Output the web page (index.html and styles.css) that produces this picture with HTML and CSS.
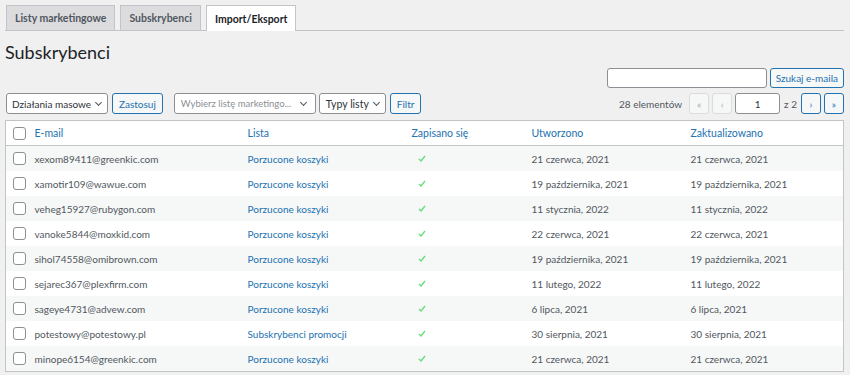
FILE: index.html
```html
<!DOCTYPE html>
<html lang="pl">
<head>
  <meta charset="UTF-8">
  <title>Subskrybenci</title>
  <link rel="stylesheet" href="styles.css">
</head>
<body>
  <div class="wrap">
    <nav class="tabs">
      <a class="tab">Listy marketingowe</a>
      <a class="tab">Subskrybenci</a>
      <a class="tab active">Import/Eksport</a>
    </nav>

    <h1>Subskrybenci</h1>

    <div class="search">
      <input type="text" class="search-input">
      <button class="btn">Szukaj e-maila</button>
    </div>

    <div class="toolbar">
      <div class="left">
        <div class="select w-bulk">Działania masowe <span class="chev"></span></div>
        <button class="btn">Zastosuj</button>
        <div class="select w-list placeholder">Wybierz listę marketingo... <span class="chev"></span></div>
        <div class="select w-type">Typy listy <span class="chev"></span></div>
        <button class="btn">Filtr</button>
      </div>
      <div class="pages">
        <span class="count">28 elementów</span>
        <span class="pbtn off">«</span>
        <span class="pbtn off">‹</span>
        <span class="pinput">1</span>
        <span class="total">z 2</span>
        <span class="pbtn">›</span>
        <span class="pbtn">»</span>
      </div>
    </div>

    <table class="list">
      <colgroup>
        <col class="c-cb"><col class="c-mail"><col class="c-list"><col class="c-sub"><col class="c-created"><col>
      </colgroup>
      <thead>
        <tr>
          <th class="cb"><span class="box"></span></th>
          <th>E-mail</th>
          <th>Lista</th>
          <th>Zapisano się</th>
          <th>Utworzono</th>
          <th>Zaktualizowano</th>
        </tr>
      </thead>
      <tbody>
        <tr><td class="cb"><span class="box"></span></td><td>xexom89411@greenkic.com</td><td><a>Porzucone koszyki</a></td><td class="ok"><svg viewBox="0 0 8 7"><path d="M1 4l2 2 4-5"/></svg></td><td>21 czerwca, 2021</td><td>21 czerwca, 2021</td></tr>
        <tr><td class="cb"><span class="box"></span></td><td>xamotir109@wawue.com</td><td><a>Porzucone koszyki</a></td><td class="ok"><svg viewBox="0 0 8 7"><path d="M1 4l2 2 4-5"/></svg></td><td>19 października, 2021</td><td>19 października, 2021</td></tr>
        <tr><td class="cb"><span class="box"></span></td><td>veheg15927@rubygon.com</td><td><a>Porzucone koszyki</a></td><td class="ok"><svg viewBox="0 0 8 7"><path d="M1 4l2 2 4-5"/></svg></td><td>11 stycznia, 2022</td><td>11 stycznia, 2022</td></tr>
        <tr><td class="cb"><span class="box"></span></td><td>vanoke5844@moxkid.com</td><td><a>Porzucone koszyki</a></td><td class="ok"><svg viewBox="0 0 8 7"><path d="M1 4l2 2 4-5"/></svg></td><td>22 czerwca, 2021</td><td>22 czerwca, 2021</td></tr>
        <tr><td class="cb"><span class="box"></span></td><td>sihol74558@omibrown.com</td><td><a>Porzucone koszyki</a></td><td class="ok"><svg viewBox="0 0 8 7"><path d="M1 4l2 2 4-5"/></svg></td><td>19 października, 2021</td><td>19 października, 2021</td></tr>
        <tr><td class="cb"><span class="box"></span></td><td>sejarec367@plexfirm.com</td><td><a>Porzucone koszyki</a></td><td class="ok"><svg viewBox="0 0 8 7"><path d="M1 4l2 2 4-5"/></svg></td><td>11 lutego, 2022</td><td>11 lutego, 2022</td></tr>
        <tr><td class="cb"><span class="box"></span></td><td>sageye4731@advew.com</td><td><a>Porzucone koszyki</a></td><td class="ok"><svg viewBox="0 0 8 7"><path d="M1 4l2 2 4-5"/></svg></td><td>6 lipca, 2021</td><td>6 lipca, 2021</td></tr>
        <tr><td class="cb"><span class="box"></span></td><td>potestowy@potestowy.pl</td><td><a>Subskrybenci promocji</a></td><td class="ok"><svg viewBox="0 0 8 7"><path d="M1 4l2 2 4-5"/></svg></td><td>30 sierpnia, 2021</td><td>30 sierpnia, 2021</td></tr>
        <tr><td class="cb"><span class="box"></span></td><td>minope6154@greenkic.com</td><td><a>Porzucone koszyki</a></td><td class="ok"><svg viewBox="0 0 8 7"><path d="M1 4l2 2 4-5"/></svg></td><td>21 czerwca, 2021</td><td>21 czerwca, 2021</td></tr>
      </tbody>
    </table>
  </div>
</body>
</html>
```

FILE: styles.css
```css
body {
  margin: 0;
  background: #f0f0f1;
  font-family: Lato, 'Noto Sans', sans-serif;
  color: #50575e;
  font-size: 10px;
}
.wrap {
  padding: 5px 6px 0 5px;
}
.tabs {
  display: flex;
  gap: 5px;
  padding-left: 1px;
  border-bottom: 1px solid #c3c4c7;
  height: 25px;
}
.tab {
  display: flex;
  align-items: center;
  padding: 0 8px;
  height: 24px;
  background: #dcdcde;
  border: 1px solid #c3c4c7;
  border-bottom: none;
  font-weight: 700;
  font-size: 10.5px;
  color: #50575e;
}
.tab.active {
  background: #ffffff;
  color: #1d2327;
  height: 25px;
  margin-bottom: -1px;
}
h1 {
  margin: 10px 0 0;
  font-size: 18px;
  font-weight: 400;
  color: #1d2327;
  line-height: 23px;
}
.search {
  display: flex;
  justify-content: flex-end;
  gap: 3px;
  margin-top: 4px;
  height: 20px;
}
.search-input {
  width: 160px;
  box-sizing: border-box;
  margin: 0;
  border: 1px solid #8c8f94;
  border-radius: 3px;
  background: #ffffff;
}
.btn {
  font-family: inherit;
  font-size: 10px;
  color: #2271b1;
  background: #f6f7f7;
  border: 1px solid #2271b1;
  border-radius: 3px;
  padding: 0 6px;
  height: 20px;
  margin: 0;
  white-space: nowrap;
}
.search .btn {
  padding: 0 5px;
}
.toolbar {
  display: flex;
  justify-content: space-between;
  align-items: center;
  margin-top: 5px;
  height: 21px;
}
.left {
  display: flex;
  align-items: center;
}
.left .btn {
  height: 21px;
  margin-left: 4px;
}
.select {
  display: flex;
  align-items: center;
  justify-content: space-between;
  box-sizing: border-box;
  height: 21px;
  padding: 0 6px;
  background: #ffffff;
  border: 1px solid #8c8f94;
  border-radius: 3px;
  color: #2c3338;
  font-size: 10.5px;
  margin-left: 1px;
  white-space: nowrap;
}
.w-bulk { width: 102px; font-size: 10px; padding: 0 6px 0 5px; }
.w-list { width: 142px; margin-left: 11px; color: #8c8f94; font-size: 9.5px; padding-right: 9px; }
.w-type { width: 67px; margin-left: 3px; }
.chev {
  flex: none;
  width: 4px;
  height: 4px;
  border-right: 1px solid #50575e;
  border-bottom: 1px solid #50575e;
  transform: rotate(45deg);
  margin: -3px 0 0 4px;
}
.pages {
  display: flex;
  align-items: center;
  gap: 3px;
}
.count {
  margin-right: 4px;
  color: #50575e;
}
.pbtn {
  display: flex;
  align-items: center;
  justify-content: center;
  box-sizing: border-box;
  width: 20px;
  height: 21px;
  border: 1px solid #2271b1;
  border-radius: 3px;
  background: #f6f7f7;
  color: #2271b1;
  font-size: 10px;
}
.pbtn.off {
  border-color: #dcdcde;
  color: #a7aaad;
}
.pinput {
  display: flex;
  align-items: center;
  justify-content: center;
  box-sizing: border-box;
  width: 45px;
  height: 21px;
  border: 1px solid #8c8f94;
  border-radius: 3px;
  background: #ffffff;
  color: #2c3338;
}
.total {
  margin: 0 1px;
}
.list {
  width: 100%;
  margin-top: 6px;
  border-collapse: collapse;
  table-layout: fixed;
  background: #ffffff;
  border: 1px solid #c3c4c7;
}
.c-cb { width: 29px; }
.c-mail { width: 213px; }
.c-list { width: 164px; }
.c-sub { width: 120px; }
.c-created { width: 159px; }
th {
  text-align: left;
  font-weight: 400;
  font-size: 10.5px;
  color: #2271b1;
  height: 24px;
  padding: 0;
  border-bottom: 1px solid #c3c4c7;
}
td {
  height: 25px;
  padding: 0;
  white-space: nowrap;
}
tbody tr:nth-child(odd) {
  background: #f6f7f7;
}
.cb {
  text-align: center;
}
.box {
  display: inline-block;
  width: 11px;
  height: 11px;
  border: 1px solid #8c8f94;
  border-radius: 3px;
  background: #ffffff;
  vertical-align: middle;
  margin-left: -2px;
}
a {
  color: #2271b1;
}
.ok {
  padding-left: 6px;
}
.ok svg {
  display: block;
  width: 8px;
  height: 7px;
  fill: none;
  stroke: #68de7c;
  stroke-width: 1.4;
}
```
